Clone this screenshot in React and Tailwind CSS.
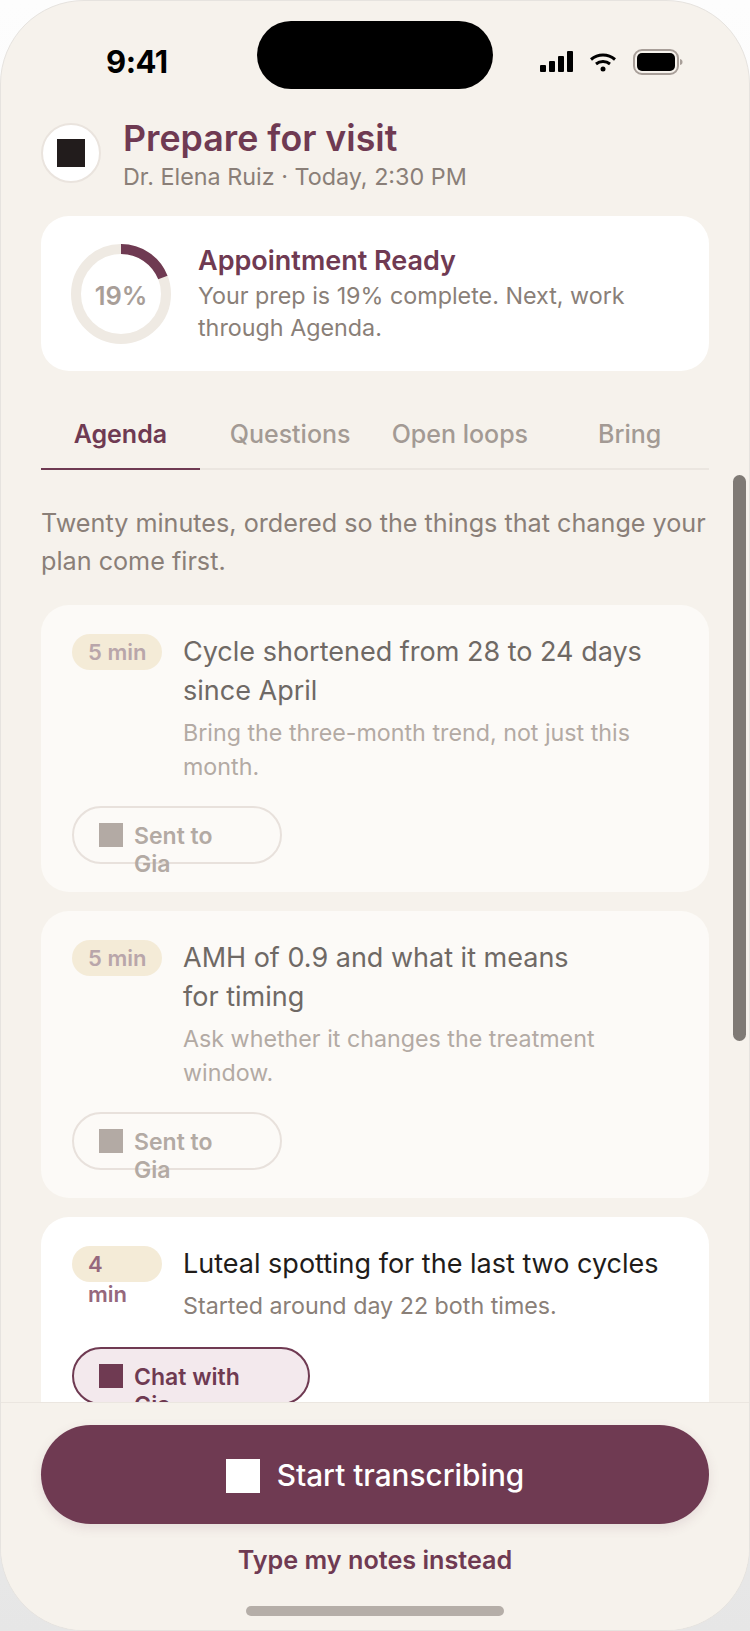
import React from 'react';

const AGENDA = [
  {
    mins: '5 min',
    title: 'Cycle shortened from 28 to 24 days since April',
    titleWidth: 'max-w-[480px]',
    note: 'Bring the three-month trend, not just this month.',
    sent: true,
  },
  {
    mins: '5 min',
    title: 'AMH of 0.9 and what it means for timing',
    titleWidth: 'max-w-[400px]',
    note: 'Ask whether it changes the treatment window.',
    sent: true,
  },
  {
    mins: '4 min',
    title: 'Luteal spotting for the last two cycles',
    titleWidth: 'max-w-[490px]',
    note: 'Started around day 22 both times.',
    sent: false,
  },
];

const TABS = ['Agenda', 'Questions', 'Open loops', 'Bring'];

function StatusIcons() {
  return (
    <div className="flex items-center">
      <svg width="34" height="22" viewBox="0 0 34 22" fill="#000">
        <rect x="0" y="14" width="6" height="7" rx="1" />
        <rect x="9" y="10" width="6" height="11" rx="1" />
        <rect x="18" y="5" width="6" height="16" rx="1" />
        <rect x="27" y="0" width="6" height="21" rx="1" />
      </svg>
      <svg className="ml-[15px]" width="28" height="20" viewBox="0 0 28 20" fill="none" stroke="#000" strokeWidth="3">
        <path d="M2 7.5C9 1.5 19 1.5 26 7.5" />
        <path d="M7 12C11 8.8 17 8.8 21 12" />
        <circle cx="14" cy="17" r="2.5" fill="#000" stroke="none" />
      </svg>
      <svg className="ml-[16px]" width="50" height="26" viewBox="0 0 50 26">
        <rect x="1" y="1" width="44" height="24" rx="8" fill="none" stroke="#a89f99" strokeWidth="2" />
        <rect x="4" y="4" width="38" height="18" rx="5" fill="#000" />
        <path d="M47 10C49 10.5 49.5 11.5 49.5 13C49.5 14.5 49 15.5 47 16Z" fill="#a89f99" />
      </svg>
    </div>
  );
}

function ProgressRing() {
  const r = 45;
  const c = 2 * Math.PI * r;
  return (
    <div className="relative h-[100px] w-[100px] shrink-0">
      <svg width="100" height="100" viewBox="0 0 100 100" className="-rotate-90">
        <circle cx="50" cy="50" r={r} fill="none" stroke="#efeae3" strokeWidth="10" />
        <circle
          cx="50"
          cy="50"
          r={r}
          fill="none"
          stroke="#6f3a52"
          strokeWidth="10"
          strokeDasharray={`${c * 0.19} ${c}`}
        />
      </svg>
      <div className="absolute inset-0 flex items-center justify-center pt-[5px] text-[25.5px] font-semibold text-[#a89e98]">
        19%
      </div>
    </div>
  );
}

function AgendaCard({ item }) {
  const faded = item.sent;
  return (
    <div className={`h-[287px] rounded-[28px] px-[31px] pt-[29px] ${faded ? 'bg-[#fcfaf7]' : 'bg-white'}`}>
      <div className="flex items-start">
        <div className="h-[36px] w-[90px] shrink-0 rounded-[18px] bg-[#f4ebd7] px-[16px]">
          <div
            className={`text-[22px] font-semibold ${
              faded ? 'whitespace-nowrap leading-[37px] text-[#b9a6aa]' : 'w-[50px] pt-[3px] leading-[30px] text-[#96687d]'
            }`}
          >
            {item.mins}
          </div>
        </div>
        <div className="ml-[21px] min-w-0 flex-1">
          <div
            className={`-mt-[2px] text-[27px] leading-[39px] ${item.titleWidth} ${faded ? 'text-[#6f6965]' : 'text-[#211c1a]'}`}
          >
            {item.title}
          </div>
          <div className={`mt-[6px] text-[23.25px] leading-[33.5px] ${faded ? 'text-[#b3aaa4]' : 'text-[#8a7f78]'}`}>
            {item.note}
          </div>
        </div>
      </div>
      <div
        className={`flex h-[58px] items-start rounded-[29px] border-2 pl-[25px] pt-[14px] ${
          faded ? 'mt-[23px] w-[210px] border-[#e8e1dc]' : 'mt-[24px] w-[238px] border-[#6f3a52] bg-[#f3e9ed]'
        }`}
      >
        <div className={`mt-[1px] h-[24px] w-[24px] shrink-0 ${faded ? 'bg-[#b3aaa4]' : 'bg-[#6f3a52]'}`} />
        <div
          className={`ml-[11px] text-[23px] font-semibold leading-[28px] ${
            faded ? 'w-[100px] text-[#b3aaa4]' : 'w-[130px] text-[#6f3a52]'
          }`}
        >
          {faded ? 'Sent to Gia' : 'Chat with Gia'}
        </div>
      </div>
    </div>
  );
}

export default function App() {
  return (
    <div className="h-[1631px] w-[750px] overflow-hidden bg-[linear-gradient(180deg,#fdfdfd_0%,#f6f6f6_50%,#e6e6e6_100%)] font-['Inter',sans-serif]">
      <div className="relative flex h-full flex-col overflow-hidden rounded-[84px] border border-[#e6e3df] bg-[#f6f2ec]">
        {/* Status bar */}
        <div className="flex h-[117px] shrink-0 items-start justify-between pl-[105px] pr-[66px] pt-[41px]">
          <span className="text-[31px] font-bold leading-[40px] tracking-[-0.5px] text-black">9:41</span>
          <div className="pt-[7px]">
            <StatusIcons />
          </div>
        </div>
        <div className="absolute left-[256px] top-[20px] h-[68px] w-[236px] rounded-[34px] bg-black" />

        {/* Header */}
        <div className="flex shrink-0 items-start px-[40px]">
          <div className="mt-[5px] flex h-[60px] w-[60px] items-center justify-center rounded-full border-2 border-[#eae4de] bg-white">
            <div className="h-[28px] w-[28px] bg-[#221c1c]" />
          </div>
          <div className="ml-[22px]">
            <div className="text-[35.75px] font-semibold leading-[40px] text-[#6f3a52]">Prepare for visit</div>
            <div className="mt-[4px] h-[29px] text-[23.35px] leading-[30px] text-[#8a7f78]">Dr. Elena Ruiz · Today, 2:30 PM</div>
          </div>
        </div>

        {/* Summary card */}
        <div className="mx-[40px] mt-[25px] flex h-[155px] shrink-0 items-center rounded-[28px] bg-white px-[30px]">
          <ProgressRing />
          <div className="ml-[27px]">
            <div className="text-[27px] font-semibold leading-[34px] text-[#6f3a52]">Appointment Ready</div>
            <div className="mt-[2px] text-[23.3px] leading-[32px] text-[#8a7f78]">
              Your prep is 19% complete. Next, work through Agenda.
            </div>
          </div>
        </div>

        {/* Tabs */}
        <div className="mx-[40px] mt-[28px] grid shrink-0 grid-cols-4 gap-[11px] border-b-2 border-[#ebe6e0]">
          {TABS.map((tab, i) => (
            <div
              key={tab}
              className={`-mb-[2px] h-[71px] whitespace-nowrap border-b-2 pt-[18px] text-center text-[25px] leading-[34px] ${
                i === 0
                  ? 'border-[#6f3a52] font-semibold text-[#6f3a52]'
                  : 'border-transparent font-medium text-[#a39a94]'
              }`}
            >
              {tab}
            </div>
          ))}
        </div>

        {/* Scrolling agenda */}
        <div className="min-h-0 flex-1 overflow-hidden px-[40px] pt-[34px]">
          <p className="text-[25.2px] leading-[38px] text-[#8a7f78]">
            Twenty minutes, ordered so the things that change your plan come first.
          </p>
          <div className="mt-[25px] flex flex-col gap-[19px]">
            {AGENDA.map((item) => (
              <AgendaCard key={item.title} item={item} />
            ))}
          </div>
        </div>

        {/* Scrollbar */}
        <div className="absolute right-[3px] top-[474px] h-[566px] w-[13px] rounded-full bg-[#7f7a75]" />

        {/* Footer */}
        <div className="relative flex h-[228px] shrink-0 flex-col items-center border-t border-[#ebe6e0] bg-[#f6f2ec] px-[40px] pt-[22px]">
          <button className="flex h-[99px] w-full items-center justify-center rounded-[50px] bg-[#6f3a52] pt-[2px] shadow-[0_4px_12px_rgba(111,58,82,0.12)]">
            <span className="h-[34px] w-[34px] bg-white" />
            <span className="ml-[17px] text-[29.75px] font-medium text-white">Start transcribing</span>
          </button>
          <div className="mt-[18px] text-[25.2px] font-semibold leading-[36px] text-[#6f3a52]">
            Type my notes instead
          </div>
          <div className="absolute bottom-[14px] left-[245px] h-[10px] w-[258px] rounded-full bg-[#b5aea8]" />
        </div>
      </div>
    </div>
  );
}
